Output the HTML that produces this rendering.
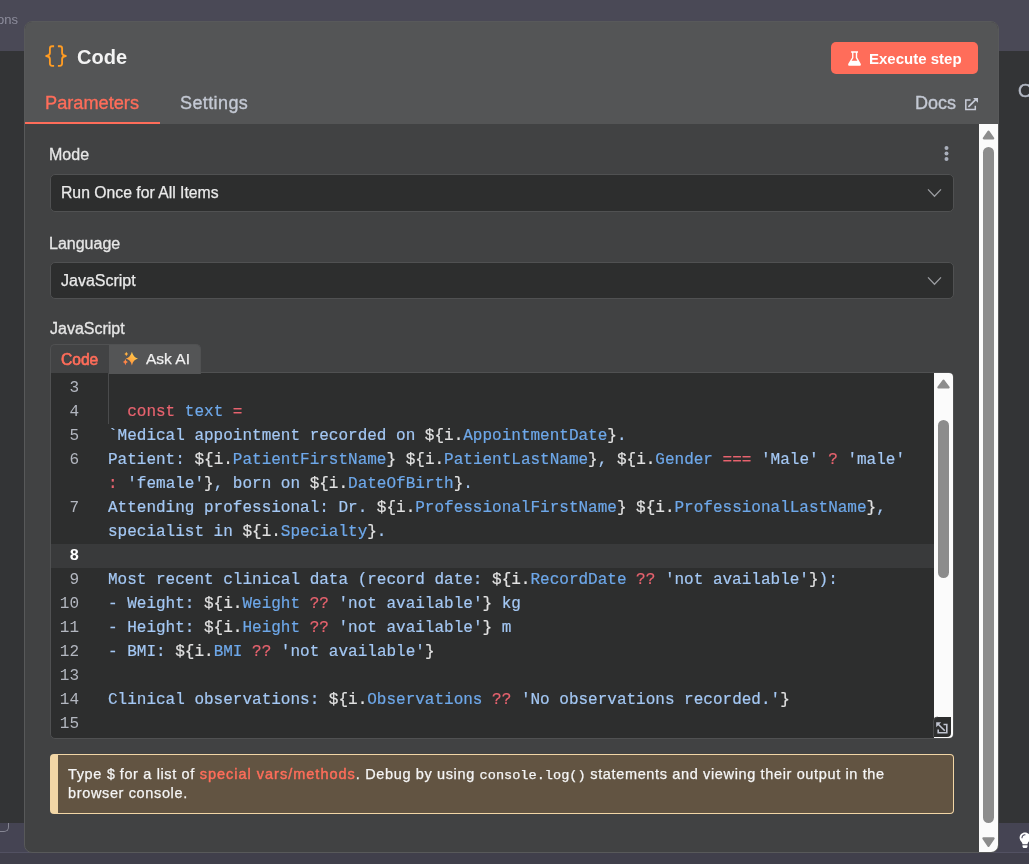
<!DOCTYPE html>
<html><head><meta charset="utf-8">
<style>
*{box-sizing:border-box;margin:0;padding:0}
html,body{width:1029px;height:864px;overflow:hidden}
body{position:relative;background:#333436;font-family:"Liberation Sans",sans-serif;color:#e6e6e6}
.a{position:absolute;white-space:pre;will-change:transform}
svg{position:absolute;overflow:visible}
#topband{left:0;top:0;width:1029px;height:51px;background:#4a4956}
#botband{left:0;top:823px;width:1029px;height:29px;background:#454453}
#botline{left:0;top:852px;width:1029px;height:1px;background:#525162}
#bottom{left:0;top:853px;width:1029px;height:11px;background:#403f4b}
#ons{left:-3px;top:12px;font-size:13px;line-height:16px;color:#8d8d9c}
#rightO{left:1018px;top:80px;font-size:19px;line-height:22px;color:#b5bac6;-webkit-text-stroke:0.4px #b5bac6}
#modal{left:24px;top:21px;width:975px;height:832px;background:#414243;border-radius:8px;border:1px solid #58595a}
#header{left:25px;top:22px;width:973px;height:102px;background:#545556;border-radius:7px 7px 0 0}
#title{left:77px;top:45px;font-size:20px;line-height:24px;font-weight:bold;color:#f3f3f3}
#exec{left:831px;top:42px;width:147px;height:32px;background:#ff6d5a;border-radius:5px}
#exectext{left:869px;top:50px;font-size:15px;line-height:18px;font-weight:bold;color:#fff}
#tabP{left:45px;top:92px;font-size:18.2px;line-height:22px;color:#ff6d5a;-webkit-text-stroke:0.35px #ff6d5a}
#tabS{left:180px;top:92px;font-size:18px;letter-spacing:0.4px;line-height:22px;color:#c4c9d4;-webkit-text-stroke:0.35px #c4c9d4}
#underline{left:25px;top:122px;width:135px;height:2px;background:#ff6d5a}
#docs{left:915px;top:92px;font-size:18px;line-height:22px;color:#c4c9d4;-webkit-text-stroke:0.35px #c4c9d4}
.lbl{font-size:16px;line-height:20px;color:#e6e6e6;-webkit-text-stroke:0.3px #e6e6e6}
.sel{left:50px;width:904px;height:37px;background:#2d2e2e;border:1px solid #505152;border-radius:5px}
.seltext{font-size:16px;line-height:20px;color:#eaeaea;-webkit-text-stroke:0.25px #eaeaea}
#tabc{left:50px;top:344px;width:59px;height:29px;border:1px solid #505152;border-right:none;border-bottom:none;border-radius:5px 0 0 0;background:#424344}
#tabask{left:109px;top:344px;width:92px;height:30px;border:1px solid #505152;border-left:none;border-bottom:none;border-radius:0 5px 0 0;background:#545556}
#tabcode{left:61px;top:351px;font-size:15.6px;line-height:18px;color:#ff6d5a;-webkit-text-stroke:0.65px #ff6d5a}
#tabasktext{left:146px;top:350px;font-size:15.5px;line-height:18px;color:#f0f0f0;-webkit-text-stroke:0.25px #f0f0f0}
#editor{left:50px;top:372px;width:904px;height:367px;background:#2d2e2e;border:1px solid #505152;border-radius:0 5px 5px 5px}
#gutline{left:108px;top:373px;width:1px;height:51px;background:#4a4b4c}
#actline{left:51px;top:544px;width:883px;height:24px;background:#393a3b}
.ln{left:50px;width:29px;text-align:right;font-family:"Liberation Mono",monospace;font-size:16px;line-height:24px;color:#b3b7c0}
.ln.act{color:#ffffff;font-weight:bold}
.cl{left:108px;font-family:"Liberation Mono",monospace;font-size:16px;line-height:24px;color:#a4c8f4;-webkit-text-stroke:0.2px}
.s{color:#a4c8f4}.d{color:#e2e2e2}.p{color:#6ea8ea}.o{color:#e8636f}.k{color:#e8636f}.v{color:#6ea8ea}
#escroll{left:934px;top:373px;width:19px;height:365px;background:#fbfbfb;border-radius:0 4px 4px 0}
#callout{left:50px;top:754px;width:904px;height:60px;background:#625442;border:1px solid #f2d6a6;border-left:8px solid #f2d6a6;border-radius:4px}
.ct{left:68px;font-size:14.5px;line-height:19px;color:#f5f5f5;letter-spacing:0.64px;-webkit-text-stroke:0.25px #f5f5f5}
.ct .m{font-family:"Liberation Mono",monospace;font-size:14px;letter-spacing:0}
.ct .lnk{color:#ff6d5a;-webkit-text-stroke:0.45px #ff6d5a;letter-spacing:1px}
.ct code{font-family:"Liberation Mono",monospace;font-size:13.6px;letter-spacing:0}
#mscroll{left:979px;top:124px;width:19px;height:728px;background:#fbfbfb;border-radius:0 0 7px 0}
</style></head><body>
<div id="topband" class="a"></div>
<div id="botband" class="a"></div>
<div id="botline" class="a"></div>
<div id="bottom" class="a"></div>
<div id="ons" class="a">ons</div>
<div class="a" style="left:-7px;top:818px;width:15.5px;height:14px;border-right:1.4px solid #868693;border-bottom:1.4px solid #868693;border-radius:0 0 5px 0"></div>
<div class="a" style="left:0;top:813px;width:24px;height:10px;background:#333436"></div>
<div id="rightO" class="a">O</div>
<svg style="left:1019px;top:832px" width="12" height="17" viewBox="0 0 12 17"><path d="M6 0.5C2.9 0.5 0.6 2.8 0.6 5.7c0 2 1.2 3.2 2 4.3.6.8.9 1.5.9 2.2h5c0-.7.3-1.4.9-2.2.8-1.1 2-2.3 2-4.3C11.4 2.8 9.1.5 6 .5z" fill="#fff"/><path d="M3.5 13.2h5v1.2c0 .8-.7 1.6-1.6 1.6H5.1c-.9 0-1.6-.8-1.6-1.6z" fill="#fff"/><path d="M3 5.8C3 4 4.3 2.8 6 2.8" stroke="#46455a" stroke-width="1.1" fill="none" stroke-linecap="round"/></svg>

<div id="modal" class="a"></div>
<div id="header" class="a"></div>
<svg style="left:42px;top:42px" width="28" height="28" viewBox="0 0 28 28"><g fill="none" stroke="#ff9c23" stroke-width="1.85" stroke-linejoin="round"><path d="M12.1 4.2H10.1Q7.9 4.2 7.9 6.4V11Q7.9 13.4 4.2 14Q7.9 14.6 7.9 17V21.6Q7.9 23.8 10.1 23.8H12.1"/><path d="M15.9 4.2H17.9Q20.1 4.2 20.1 6.4V11Q20.1 13.4 23.8 14Q20.1 14.6 20.1 17V21.6Q20.1 23.8 17.9 23.8H15.9"/></g></svg>
<div id="title" class="a">Code</div>
<div id="exec" class="a"></div>
<svg style="left:844px;top:48px" width="22" height="22" viewBox="0 0 22 22"><path fill="#fff" fill-rule="evenodd" d="M7.1 3.2H14V4.8H13.2V9.4L16.6 15.4Q17.6 17.8 15.2 17.8H5.8Q3.4 17.8 4.4 15.4L8.1 9.4V4.8H7.1Z M9.4 4.8H11.8V10L13.4 12.7H7.6L9.4 10Z"/></svg>
<div id="exectext" class="a">Execute step</div>
<div id="tabP" class="a">Parameters</div>
<div id="tabS" class="a">Settings</div>
<div id="underline" class="a"></div>
<div id="docs" class="a">Docs</div>
<svg style="left:962px;top:94px" width="20" height="20" viewBox="0 0 20 20"><g fill="none" stroke="#c8ccd8" stroke-width="1.5"><path d="M8.6 6.1H3.8V15.6H13.3V11.8"/><path d="M6.9 12.4L13.6 5.7" stroke-width="1.7" stroke-linecap="round"/></g><path d="M11.1 3.9H16V8.8Z" fill="#c8ccd8"/></svg>

<div class="a lbl" style="left:49px;top:145px">Mode</div>
<svg style="left:940px;top:144px" width="12" height="20" viewBox="0 0 12 20"><g fill="#aab0bc"><circle cx="6.5" cy="4" r="2"/><circle cx="6.5" cy="9.6" r="2"/><circle cx="6.5" cy="15" r="2"/></g></svg>
<div class="a sel" style="top:174px;height:38px"></div>
<div class="a seltext" style="left:61px;top:183px;font-size:15.75px">Run Once for All Items</div>
<svg style="left:926px;top:186px" width="18" height="14" viewBox="0 0 18 14"><path d="M2 3.4L8.5 10.2L15 3.4" fill="none" stroke="#9a9ca0" stroke-width="1.3"/></svg>

<div class="a lbl" style="left:49px;top:234px">Language</div>
<div class="a sel" style="top:262px"></div>
<div class="a seltext" style="left:61px;top:271px">JavaScript</div>
<svg style="left:926px;top:274px" width="18" height="14" viewBox="0 0 18 14"><path d="M2 3.4L8.5 10.2L15 3.4" fill="none" stroke="#9a9ca0" stroke-width="1.3"/></svg>

<div class="a lbl" style="left:50px;top:319px">JavaScript</div>
<div id="editor" class="a"></div>
<div id="tabc" class="a"></div>
<div id="tabask" class="a"></div>
<div id="tabcode" class="a">Code</div>
<svg style="left:118px;top:346px" width="24" height="24" viewBox="0 0 24 24"><defs><linearGradient id="sg" gradientUnits="userSpaceOnUse" x1="18" y1="5" x2="6" y2="20"><stop offset="0" stop-color="#ffdc50"/><stop offset="0.55" stop-color="#ffa640"/><stop offset="1" stop-color="#ff6a4c"/></linearGradient></defs><g fill="url(#sg)"><path d="M13.9 5.8Q15.200000000000001 11.299999999999999 20.0 12.6Q15.200000000000001 13.9 13.9 19.4Q12.6 13.9 7.800000000000001 12.6Q12.6 11.299999999999999 13.9 5.8Z"/><path d="M8.3 5.7Q8.75 7.55 10.3 8.0Q8.75 8.45 8.3 10.3Q7.8500000000000005 8.45 6.300000000000001 8.0Q7.8500000000000005 7.55 8.3 5.7Z"/><path d="M7.4 13.000000000000002Q7.95 15.55 9.9 16.1Q7.95 16.650000000000002 7.4 19.200000000000003Q6.8500000000000005 16.650000000000002 4.9 16.1Q6.8500000000000005 15.55 7.4 13.000000000000002Z"/></g></svg>
<div id="tabasktext" class="a">Ask AI</div>

<div id="actline" class="a"></div>
<div id="gutline" class="a"></div>
<div class="a ln" style="top:376px">3</div>
<div class="a ln" style="top:400px">4</div>
<div class="a ln" style="top:424px">5</div>
<div class="a ln" style="top:448px">6</div>
<div class="a ln" style="top:496px">7</div>
<div class="a ln act" style="top:544px">8</div>
<div class="a ln" style="top:568px">9</div>
<div class="a ln" style="top:592px">10</div>
<div class="a ln" style="top:616px">11</div>
<div class="a ln" style="top:640px">12</div>
<div class="a ln" style="top:664px">13</div>
<div class="a ln" style="top:688px">14</div>
<div class="a ln" style="top:712px">15</div>
<div class="a cl" style="top:376px"></div>
<div class="a cl" style="top:400px">  <span class="k">const</span> <span class="v">text</span> <span class="o">=</span></div>
<div class="a cl" style="top:424px"><span class="s">`Medical appointment recorded on </span><span class="d">${i.</span><span class="p">AppointmentDate</span><span class="d">}</span><span class="s">.</span></div>
<div class="a cl" style="top:448px"><span class="s">Patient: </span><span class="d">${i.</span><span class="p">PatientFirstName</span><span class="d">}</span><span class="s"> </span><span class="d">${i.</span><span class="p">PatientLastName</span><span class="d">}</span><span class="s">, </span><span class="d">${i.</span><span class="p">Gender</span> <span class="o">===</span> <span class="s">&#x27;Male&#x27;</span> <span class="o">?</span> <span class="s">&#x27;male&#x27;</span></div>
<div class="a cl" style="top:472px"><span class="o">:</span> <span class="s">&#x27;female&#x27;</span><span class="d">}</span><span class="s">, born on </span><span class="d">${i.</span><span class="p">DateOfBirth</span><span class="d">}</span><span class="s">.</span></div>
<div class="a cl" style="top:496px"><span class="s">Attending professional: Dr. </span><span class="d">${i.</span><span class="p">ProfessionalFirstName</span><span class="d">}</span><span class="s"> </span><span class="d">${i.</span><span class="p">ProfessionalLastName</span><span class="d">}</span><span class="s">,</span></div>
<div class="a cl" style="top:520px"><span class="s">specialist in </span><span class="d">${i.</span><span class="p">Specialty</span><span class="d">}</span><span class="s">.</span></div>
<div class="a cl" style="top:544px"></div>
<div class="a cl" style="top:568px"><span class="s">Most recent clinical data (record date: </span><span class="d">${i.</span><span class="p">RecordDate</span> <span class="o">??</span> <span class="s">&#x27;not available&#x27;</span><span class="d">}</span><span class="s">):</span></div>
<div class="a cl" style="top:592px"><span class="s">- Weight: </span><span class="d">${i.</span><span class="p">Weight</span> <span class="o">??</span> <span class="s">&#x27;not available&#x27;</span><span class="d">}</span><span class="s"> kg</span></div>
<div class="a cl" style="top:616px"><span class="s">- Height: </span><span class="d">${i.</span><span class="p">Height</span> <span class="o">??</span> <span class="s">&#x27;not available&#x27;</span><span class="d">}</span><span class="s"> m</span></div>
<div class="a cl" style="top:640px"><span class="s">- BMI: </span><span class="d">${i.</span><span class="p">BMI</span> <span class="o">??</span> <span class="s">&#x27;not available&#x27;</span><span class="d">}</span></div>
<div class="a cl" style="top:664px"></div>
<div class="a cl" style="top:688px"><span class="s">Clinical observations: </span><span class="d">${i.</span><span class="p">Observations</span> <span class="o">??</span> <span class="s">&#x27;No observations recorded.&#x27;</span><span class="d">}</span></div>
<div class="a cl" style="top:712px"></div>
<div id="escroll" class="a"></div>
<svg style="left:934px;top:373px" width="19" height="365" viewBox="0 0 19 365"><path d="M9.5 7.6L14.6 14.4H4.4Z" fill="#8c8c8c" stroke="#8c8c8c" stroke-width="2.2" stroke-linejoin="round"/><rect x="4" y="47" width="11" height="158" rx="5.5" fill="#8c8c8c"/></svg>
<svg style="left:932px;top:716px" width="20" height="22" viewBox="0 0 20 22"><path d="M1.5 5Q1.5 1 5.5 1H19V17Q19 21 15 21H1.5Z" fill="#2d2e2e"/><path d="M1.5 21V5Q1.5 1 5.5 1" fill="none" stroke="#4a4b4c" stroke-width="1"/><g fill="none" stroke="#c0c4d0" stroke-width="1.6"><path d="M5.5 7.5L12.8 14.8"/><path d="M11.5 8.5H14.8V16.8H6.2V13.5"/></g><path d="M4.2 6.2H9.2L4.2 11.2Z" fill="#c0c4d0"/></svg>

<div id="callout" class="a"></div>
<div class="a ct" style="top:765px">Type <span class="m">$</span> for a list of <span class="lnk">special vars/methods</span>. Debug by using <code>console.log()</code> statements and viewing their output in the</div>
<div class="a ct" style="top:784px">browser console.</div>

<div id="mscroll" class="a"></div>
<svg style="left:979px;top:124px" width="19" height="728" viewBox="0 0 19 728"><path d="M9.5 7.6L14.2 14.3H4.8Z" fill="#8c8c8c" stroke="#8c8c8c" stroke-width="2.2" stroke-linejoin="round"/><rect x="4" y="23" width="11" height="676" rx="5.5" fill="#8c8c8c"/><path d="M9.5 721.8L14.6 714.3H4.4Z" fill="#8c8c8c" stroke="#8c8c8c" stroke-width="2.2" stroke-linejoin="round"/></svg>
</body></html>
